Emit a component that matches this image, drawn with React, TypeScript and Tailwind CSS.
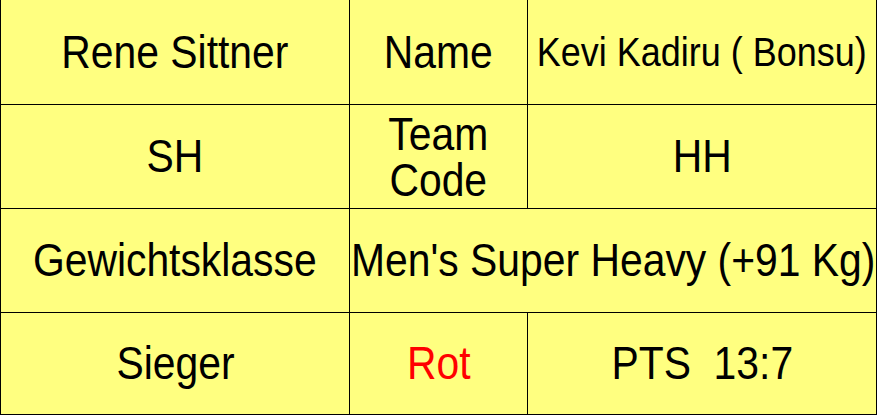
import React from "react";

const cell = "bg-[#ffff80] flex items-center justify-center text-center overflow-visible";

function T({ children, className = "" }: { children: React.ReactNode; className?: string }) {
  return (
    <span className={`inline-block whitespace-pre scale-x-[0.888] origin-center shrink-0 ${className}`}>{children}</span>
  );
}

export default function App() {
  return (
    <div className="w-[877px] h-[416px] bg-white text-black" style={{ fontFamily: "'Liberation Sans', Arial, sans-serif" }}>
      <div className="w-[877px] h-[415px] bg-black px-px pb-px grid grid-cols-[348px_177px_348px] grid-rows-[104px_103px_103px_101px] gap-px">
        <div className={`${cell} text-[46px]`}><T>Rene Sittner</T></div>
        <div className={`${cell} text-[46px]`}><T>Name</T></div>
        <div className={`${cell} text-[40.5px]`}><T>Kevi Kadiru ( Bonsu)</T></div>

        <div className={`${cell} text-[46px]`}><T>SH</T></div>
        <div className={`${cell} text-[46px] leading-[46px]`}><T>Team{"\n"}Code</T></div>
        <div className={`${cell} text-[46px]`}><T>HH</T></div>

        <div className={`${cell} text-[46px]`}><T>Gewichtsklasse</T></div>
        <div className={`${cell} col-span-2 text-[46px]`}><T>Men's Super Heavy (+91 Kg)</T></div>

        <div className={`${cell} text-[46px]`}><T>Sieger</T></div>
        <div className={`${cell} text-[46px] text-[#ff0000]`}><T>Rot</T></div>
        <div className={`${cell} text-[46px]`}><T>PTS  13:7</T></div>
      </div>
    </div>
  );
}
